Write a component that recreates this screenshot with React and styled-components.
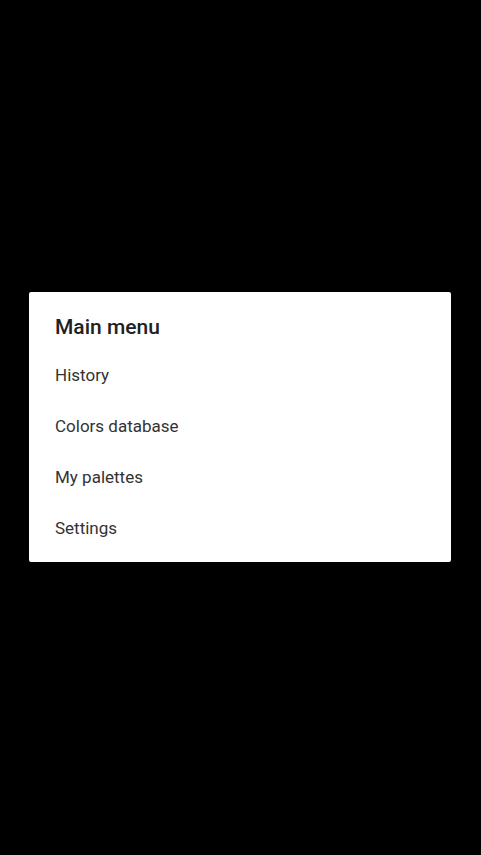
import React from "react";
import styled, { createGlobalStyle } from "styled-components";

const GlobalStyle = createGlobalStyle`
  html, body {
    margin: 0;
    padding: 0;
    background: #000;
  }
  body {
    font-family: Roboto, "Noto Sans", "Liberation Sans", sans-serif;
  }
`;

const Screen = styled.div`
  min-height: 100vh;
  box-sizing: border-box;
  padding: 0 1px 1px 0;
  display: flex;
  align-items: center;
  justify-content: center;
  background: #000;
`;

const Dialog = styled.div`
  width: 422px;
  height: 270px;
  box-sizing: border-box;
  background: #fff;
  border-radius: 2px;
  padding: 21px 0 8px;
  display: flex;
  flex-direction: column;
`;

const Title = styled.h2`
  margin: 0 0 9px;
  padding: 0 26px;
  font-size: 21px;
  line-height: 28px;
  font-weight: 500;
  color: #212121;
`;

const Item = styled.div`
  height: 51px;
  line-height: 51px;
  padding: 0 26px;
  font-size: 17px;
  color: #333;
  cursor: pointer;
`;

const items = ["History", "Colors database", "My palettes", "Settings"];

const App = () => (
  <>
    <GlobalStyle />
    <Screen>
      <Dialog>
        <Title>Main menu</Title>
        {items.map((label) => (
          <Item key={label}>{label}</Item>
        ))}
      </Dialog>
    </Screen>
  </>
);

export default App;
